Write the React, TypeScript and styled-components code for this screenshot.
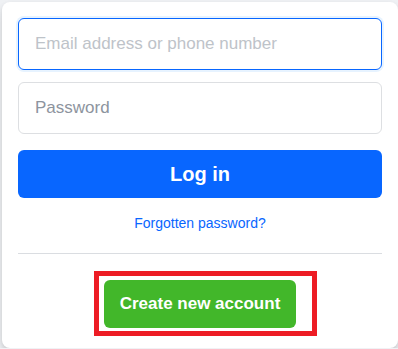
import styled, { createGlobalStyle } from "styled-components";

const GlobalStyle = createGlobalStyle`
  body {
    margin: 0;
    background-color: #f0f2f5;
    font-family: "Liberation Sans", Arial, Helvetica, sans-serif;
  }
`;

const Card = styled.div`
  box-sizing: border-box;
  width: 396px;
  height: 346px;
  margin: 2px 0 0 2px;
  padding: 16px 16px 16px 16px;
  background-color: #fff;
  border-radius: 8px;
  box-shadow: 0 2px 4px rgba(0, 0, 0, 0.1), 0 8px 16px rgba(0, 0, 0, 0.1);
  display: flex;
  flex-direction: column;
`;

const Form = styled.form`
  display: flex;
  flex-direction: column;
`;

const Input = styled.input<{ $focused?: boolean }>`
  box-sizing: border-box;
  width: 100%;
  height: 52px;
  padding: 14px 16px;
  margin-bottom: 12px;
  font-family: inherit;
  font-size: 17px;
  color: #1c1e21;
  border-radius: 6px;
  outline: none;
  border: 1px solid ${(p) => (p.$focused ? "#0866ff" : "#dddfe2")};
  box-shadow: ${(p) => (p.$focused ? "0 0 0 2px #e7f3ff" : "none")};
  &::placeholder {
    color: ${(p) => (p.$focused ? "#bec3c9" : "#8d949e")};
  }
`;

const LoginButton = styled.button`
  width: 100%;
  height: 48px;
  margin-top: 4px;
  border: none;
  border-radius: 6px;
  background-color: #0866ff;
  color: #fff;
  font-family: inherit;
  font-size: 20px;
  font-weight: bold;
  line-height: 48px;
  padding: 0 16px;
  cursor: pointer;
`;

const ForgotLink = styled.a`
  display: block;
  margin-top: 16px;
  text-align: center;
  font-size: 14px;
  line-height: 19px;
  color: #0866ff;
  text-decoration: none;
`;

const Divider = styled.div`
  height: 1px;
  margin: 20px 0 26px;
  background-color: #dadde1;
`;

const CreateRow = styled.div`
  display: flex;
  justify-content: center;
`;

const Highlight = styled.div`
  position: relative;
  &::after {
    content: "";
    position: absolute;
    top: -9px;
    left: -10px;
    right: -21px;
    bottom: -8px;
    border: 5px solid #ed1c24;
    pointer-events: none;
  }
`;

const CreateButton = styled.button`
  display: block;
  height: 48px;
  padding: 0 16px;
  border: none;
  border-radius: 6px;
  background-color: #42b72a;
  color: #fff;
  font-family: inherit;
  font-size: 17px;
  font-weight: bold;
  line-height: 48px;
  cursor: pointer;
`;

export default function App() {
  return (
    <>
      <GlobalStyle />
      <Card>
        <Form onSubmit={(e) => e.preventDefault()}>
          <Input $focused type="text" placeholder="Email address or phone number" />
          <Input type="password" placeholder="Password" />
          <LoginButton type="submit">Log in</LoginButton>
        </Form>
        <ForgotLink href="#">Forgotten password?</ForgotLink>
        <Divider />
        <CreateRow>
          <Highlight>
            <CreateButton type="button">Create new account</CreateButton>
          </Highlight>
        </CreateRow>
      </Card>
    </>
  );
}
